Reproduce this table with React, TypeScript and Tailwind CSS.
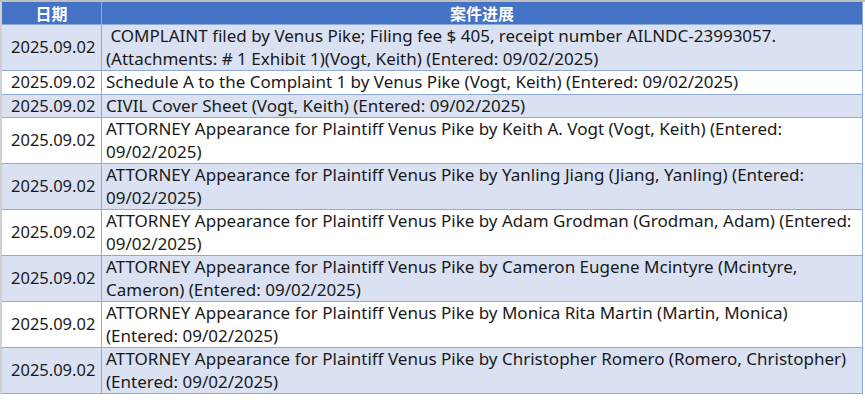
const rows: { d: string; t: string[] }[] = [
  { d: "2025.09.02", t: [" COMPLAINT filed by Venus Pike; Filing fee $ 405, receipt number AILNDC-23993057.", "(Attachments: # 1 Exhibit 1)(Vogt, Keith) (Entered: 09/02/2025)"] },
  { d: "2025.09.02", t: ["Schedule A to the Complaint 1 by Venus Pike (Vogt, Keith) (Entered: 09/02/2025)"] },
  { d: "2025.09.02", t: ["CIVIL Cover Sheet (Vogt, Keith) (Entered: 09/02/2025)"] },
  { d: "2025.09.02", t: ["ATTORNEY Appearance for Plaintiff Venus Pike by Keith A. Vogt (Vogt, Keith) (Entered:", "09/02/2025)"] },
  { d: "2025.09.02", t: ["ATTORNEY Appearance for Plaintiff Venus Pike by Yanling Jiang (Jiang, Yanling) (Entered:", "09/02/2025)"] },
  { d: "2025.09.02", t: ["ATTORNEY Appearance for Plaintiff Venus Pike by Adam Grodman (Grodman, Adam) (Entered:", "09/02/2025)"] },
  { d: "2025.09.02", t: ["ATTORNEY Appearance for Plaintiff Venus Pike by Cameron Eugene Mcintyre (Mcintyre,", "Cameron) (Entered: 09/02/2025)"] },
  { d: "2025.09.02", t: ["ATTORNEY Appearance for Plaintiff Venus Pike by Monica Rita Martin (Martin, Monica)", "(Entered: 09/02/2025)"] },
  { d: "2025.09.02", t: ["ATTORNEY Appearance for Plaintiff Venus Pike by Christopher Romero (Romero, Christopher)", "(Entered: 09/02/2025)"] },
];

export default function App() {
  return (
    <div
      className="w-[865px] h-[400px] bg-white overflow-hidden text-[#1a1a1a]"
      style={{ fontFamily: '"Noto Sans", "Noto Sans CJK SC", sans-serif' }}
    >
      <div className="h-[2px] bg-[#bfbfbf]" />
      <div className="flex">
        <div className="w-[2px] bg-[#d0d0d0]" />
        <div className="w-[861px] border-r border-[#8eaadb]">
          <div className="grid grid-cols-[100px_1fr] h-[22px] bg-[#4472c4] text-white text-[16px] font-bold leading-[22px]">
            <div className="text-center border-r border-[#8eaadb]" style={{ fontFamily: '"Noto Sans CJK SC", sans-serif' }}>日期</div>
            <div className="text-center" style={{ fontFamily: '"Noto Sans CJK SC", sans-serif' }}>案件进展</div>
          </div>
          {rows.map((r, i) => (
            <div
              key={i}
              className={`grid grid-cols-[100px_1fr] border-t border-[#8eaadb] leading-[22.5px] ${i % 2 === 0 ? "bg-[#d9e1f2]" : "bg-white"}`}
            >
              <div className="border-r border-[#8eaadb] flex items-center pl-[9px] whitespace-nowrap text-[16.5px]">{r.d}</div>
              <div className="pl-[4px] whitespace-pre text-[17px]">
                {r.t.map((l, j) => (
                  <div key={j}>{l}</div>
                ))}
              </div>
            </div>
          ))}
          <div className="border-t border-[#8eaadb]" />
        </div>
      </div>
    </div>
  );
}
